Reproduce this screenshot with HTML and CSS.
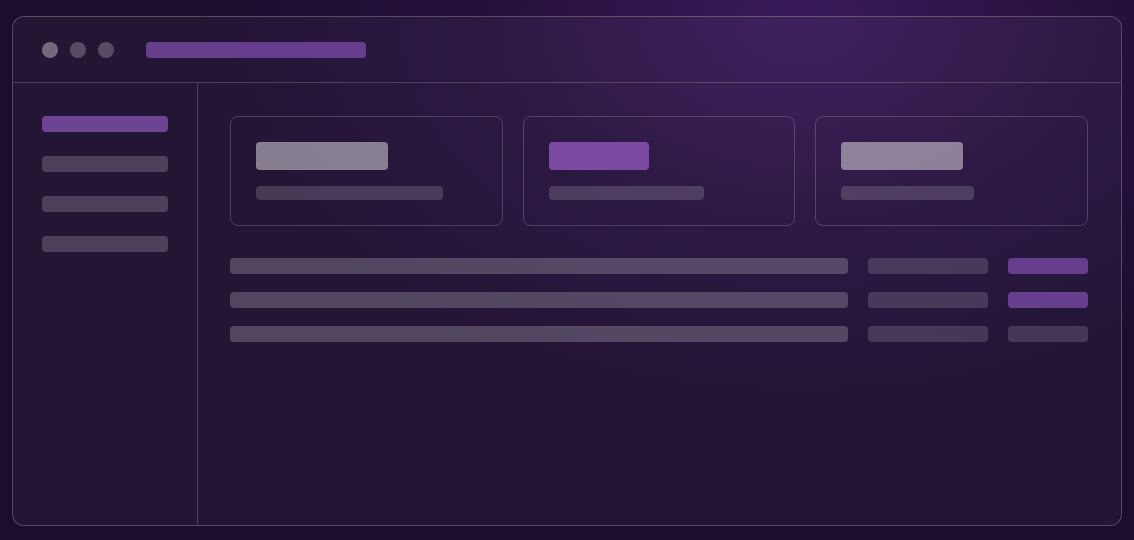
FILE: index.html
```html
<!DOCTYPE html>
<html>
<head>
<meta charset="utf-8">
<link rel="stylesheet" href="styles.css">
</head>
<body>
<div class="window">
  <div class="titlebar">
    <span class="dot dot-a"></span>
    <span class="dot"></span>
    <span class="dot"></span>
    <span class="title-pill"></span>
  </div>
  <div class="body">
    <div class="sidebar">
      <div class="nav nav-active"></div>
      <div class="nav"></div>
      <div class="nav"></div>
      <div class="nav"></div>
    </div>
    <div class="main">
      <div class="cards">
        <div class="card">
          <div class="big big-gray" style="width:132px"></div>
          <div class="small" style="width:187px"></div>
        </div>
        <div class="card">
          <div class="big big-purple" style="width:100px"></div>
          <div class="small" style="width:155px"></div>
        </div>
        <div class="card">
          <div class="big big-gray" style="width:122px"></div>
          <div class="small" style="width:133px"></div>
        </div>
      </div>
      <div class="rows">
        <div class="bar c1"></div><div class="bar c2"></div><div class="bar purple"></div>
        <div class="bar c1"></div><div class="bar c2"></div><div class="bar purple"></div>
        <div class="bar c1"></div><div class="bar c2"></div><div class="bar c2"></div>
      </div>
    </div>
  </div>
</div>
</body>
</html>
```

FILE: styles.css
```css
html, body {
  margin: 0;
  padding: 0;
}
body {
  width: 1134px;
  height: 540px;
  overflow: hidden;
  background-color: #1b0d2d;
  background-image:
    radial-gradient(ellipse 600px 400px at 800px 20px, rgba(70, 30, 108, 0.7), rgba(56, 24, 90, 0.3) 55%, rgba(40, 16, 66, 0) 100%);
  font-family: "Liberation Sans", sans-serif;
  padding-top: 16px;
  padding-left: 12px;
  box-sizing: border-box;
}
.window {
  width: 1110px;
  height: 510px;
  box-sizing: border-box;
  border: 1px solid rgba(255, 255, 255, 0.22);
  border-radius: 12px;
  background: rgba(255, 255, 255, 0.035);
  display: flex;
  flex-direction: column;
  overflow: hidden;
}
.titlebar {
  height: 64px;
  border-bottom: 1px solid rgba(255, 255, 255, 0.18);
  display: flex;
  align-items: center;
  padding: 1px 0 0 29px;
  box-sizing: content-box;
  flex-shrink: 0;
}
.dot {
  width: 16px;
  height: 16px;
  border-radius: 50%;
  background: rgba(255, 255, 255, 0.24);
  margin-right: 12px;
}
.dot-a {
  background: rgba(255, 255, 255, 0.36);
}
.title-pill {
  width: 220px;
  height: 16px;
  border-radius: 4px;
  background: #673d8d;
  margin-left: 20px;
}
.body {
  flex: 1;
  display: flex;
}
.sidebar {
  width: 185px;
  border-right: 1px solid rgba(255, 255, 255, 0.18);
  padding: 33px 0 0 29px;
  box-sizing: border-box;
  display: flex;
  flex-direction: column;
  gap: 24px;
}
.nav {
  width: 126px;
  height: 16px;
  border-radius: 4px;
  background: rgba(255, 255, 255, 0.19);
}
.nav-active {
  background: #6c4393;
}
.main {
  flex: 1;
  padding: 33px 33px 0 32px;
}
.cards {
  display: grid;
  grid-template-columns: 1fr 1fr 1fr;
  gap: 20px;
}
.card {
  height: 110px;
  box-sizing: border-box;
  border: 1px solid rgba(255, 255, 255, 0.18);
  border-radius: 8px;
  padding: 25px;
  display: flex;
  flex-direction: column;
  gap: 16px;
}
.big {
  height: 28px;
  border-radius: 4px;
}
.big-gray {
  background: rgba(255, 255, 255, 0.45);
}
.big-purple {
  background: #7b4aa1;
}
.small {
  height: 14px;
  border-radius: 4px;
  background: rgba(255, 255, 255, 0.16);
}
.rows {
  margin-top: 32px;
  display: grid;
  grid-template-columns: 1fr 120px 80px;
  column-gap: 20px;
  row-gap: 18px;
}
.bar {
  height: 16px;
  border-radius: 4px;
}
.c1 {
  background: rgba(255, 255, 255, 0.21);
}
.c2 {
  background: rgba(255, 255, 255, 0.15);
}
.purple {
  background: #673d8d;
}
```
